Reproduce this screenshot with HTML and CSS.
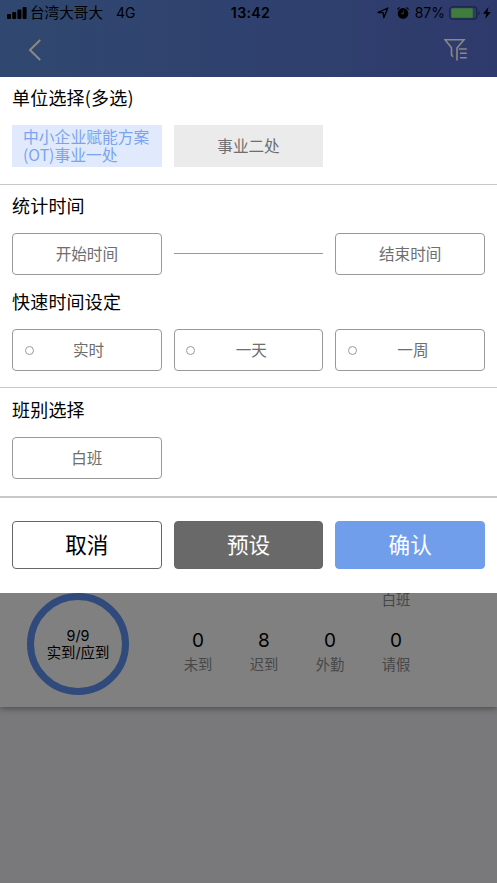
FILE: index.html
```html
<!DOCTYPE html>
<html lang="zh-CN">
<head>
<meta charset="utf-8">
<meta name="viewport" content="width=device-width">
<title>筛选</title>
<link rel="stylesheet" href="styles.css">
</head>
<body>
<header class="header">
  <div class="status">
    <div class="status-left">
      <svg class="signal" width="20" height="12" viewBox="0 0 20 12"><rect x="0" y="7" width="4" height="5" rx="1"/><rect x="5.2" y="5" width="4" height="7" rx="1"/><rect x="10.4" y="2.5" width="4" height="9.5" rx="1"/><rect x="15.6" y="0" width="4" height="12" rx="1"/></svg>
      <span class="carrier">台湾大哥大</span>
      <span class="network">4G</span>
    </div>
    <div class="clock">13:42</div>
    <div class="status-right">
      <svg width="12" height="12" viewBox="0 0 12 12"><path d="M1 5.5 10.8 1 6.8 10.8 6.2 5.7Z" fill="none" stroke="#000" stroke-width="1.3" stroke-linejoin="round"/></svg>
      <svg class="alarm" width="12" height="12" viewBox="0 0 12 12"><circle cx="6" cy="6.4" r="5.3"/><path d="M.4 2.6A7 7 0 0 1 2.6 .6M11.6 2.6A7 7 0 0 0 9.4 .6" fill="none" stroke="#000" stroke-width="1.2"/><path d="M6.3 3.6v3.2H4" fill="none" stroke="#2e3e6e" stroke-width=".9"/></svg>
      <span class="percent">87%</span>
      <svg class="battery" width="32" height="14" viewBox="0 0 32 14"><rect x=".8" y=".8" width="27" height="12.4" rx="3" fill="none" stroke="#1b2445" stroke-width="1.2"/><rect x="2.3" y="2.3" width="21.5" height="9.4" rx="1" fill="#407c3c"/><path d="M29.3 5v4q1.5-.5 1.5-2t-1.5-2" fill="#1b2445"/></svg>
      <svg class="bolt" width="8" height="12" viewBox="0 0 8 12"><path d="M5.5 0 0 6.7h3.3L2.2 12 7.8 4.9H4.4Z"/></svg>
    </div>
  </div>
  <div class="nav">
    <svg width="14" height="22" viewBox="0 0 14 22"><path d="M12.2 1 2 11 12.2 21" fill="none" stroke="#8b8984" stroke-width="2"/></svg>
    <svg width="24" height="24" viewBox="0 0 24 24"><path d="M9 18.7 7.5 17V9.7L1 1.8H20L13 10V22.5M14.8 11H22.8M16 15.3H22.8M16 19.8H22.8" fill="none" stroke="#8b8984" stroke-width="1.6"/></svg>
  </div>
</header>

<main class="panel">
  <section class="section">
    <h2>单位选择(多选)</h2>
    <div class="grid">
      <div class="tag tag-on"><span>中小企业赋能方案</span><span>(OT)事业一处</span></div>
      <div class="tag">事业二处</div>
    </div>
  </section>
  <section class="section section-time">
    <h2>统计时间</h2>
    <div class="grid">
      <div class="option">开始时间</div>
      <div class="dash"></div>
      <div class="option">结束时间</div>
    </div>
    <h2>快速时间设定</h2>
    <div class="grid">
      <div class="option radio"><i></i><span>实时</span></div>
      <div class="option radio"><i></i><span>一天</span></div>
      <div class="option radio"><i></i><span>一周</span></div>
    </div>
  </section>
  <section class="section section-shift">
    <h2>班别选择</h2>
    <div class="grid"><div class="option">白班</div></div>
  </section>
  <div class="grid actions">
    <div class="button">取消</div>
    <div class="button preset">预设</div>
    <div class="button confirm">确认</div>
  </div>
</main>

<section class="card">
  <div class="ring"><span class="ratio">9/9</span><span>实到/应到</span></div>
  <div class="stats">
    <div class="shift">白班</div>
    <div class="stat"><b>0</b><span>未到</span></div>
    <div class="stat"><b>8</b><span>迟到</span></div>
    <div class="stat"><b>0</b><span>外勤</span></div>
    <div class="stat"><b>0</b><span>请假</span></div>
  </div>
</section>
</body>
</html>
```

FILE: styles.css
```css
* { box-sizing: border-box; }
body {
  margin: 0;
  height: 883px;
  overflow: hidden;
  background: #79797b;
  color: #000;
  font-family: Inter, "Noto Sans CJK SC", sans-serif;
}
svg { display: block; flex: none; }
.header {
  height: 77px;
  background: linear-gradient(90deg, #304870, #2e3a6c);
}
.status {
  display: grid;
  grid-template-columns: 1fr auto 1fr;
  align-items: center;
  height: 26px;
  padding: 0 6px 0 7px;
  font-size: 14px;
  line-height: 20px;
}
.status-left, .status-right { display: flex; align-items: center; }
.status-right { justify-content: flex-end; }
.carrier { margin-left: 3px; font-size: 14.6px; }
.network { margin-left: 13px; }
.clock { padding-left: 3px; font-weight: 600; font-size: 14.2px; letter-spacing: .3px; }
.alarm { margin-left: 8px; }
.percent { margin-left: 6px; }
.battery { margin-left: 4px; }
.bolt { margin-left: 2px; }
.nav {
  display: flex;
  justify-content: space-between;
  align-items: center;
  height: 47px;
  padding: 0 29px 0 28px;
}
.panel { position: relative; z-index: 1; height: 515.5px; background: #fff; }
.section {
  height: 108px;
  padding: 8px 12px 0;
  border-bottom: 1px solid #c8c8c8;
}
.section-time { height: 203px; }
.section-shift { height: 109.5px; padding-top: 9px; border-bottom: 2px solid #c8c8c8; }
h2 {
  margin: 0;
  height: 40px;
  font-family: "Noto Sans CJK SC", sans-serif;
  font-size: 18px;
  line-height: 24px;
  font-weight: 400;
  letter-spacing: .2px;
}
.grid {
  display: grid;
  grid-template-columns: repeat(3, 1fr);
  gap: 12px;
}
.grid + h2 { margin-top: 14px; }
.tag, .option {
  display: flex;
  align-items: center;
  justify-content: center;
  height: 42px;
  padding-bottom: 2px;
  font: 15.6px/18px "Noto Sans CJK SC", sans-serif;
  color: #6e6e6e;
}
.tag { background: #ebebeb; }
.tag-on {
  flex-direction: column;
  align-items: flex-start;
  padding: 0 0 0 11px;
  background: #e1eafc;
  color: #7ba4ee;
  font-size: 15.8px;
  line-height: 18.5px;
}
.option { border: 1px solid #999; border-radius: 4px; }
.dash { align-self: center; height: 1px; margin-bottom: 1px; background: #999; }
.radio { justify-content: flex-start; padding: 0 15px 0 11.5px; }
.radio i { width: 9px; height: 9px; border: 1px solid #999; border-radius: 50%; }
.radio span { flex: 1; padding: 0 0 2px; text-align: center; }
.radio:first-child { padding-right: 17px; }
.actions { padding: 23px 12px 0; }
.button {
  display: flex;
  align-items: center;
  justify-content: center;
  height: 48px;
  padding-bottom: 2px;
  border: 1px solid #666;
  border-radius: 4px;
  font: 21.6px/30px "Noto Sans CJK SC", sans-serif;
}
.preset { background: #696969; color: #fff; }
.confirm { background: #719eeb; border-color: #719eeb; color: #fff; }
.card {
  display: flex;
  height: 114px;
  padding-left: 27px;
  background: #808080;
  box-shadow: 0 2px 6px rgba(0, 0, 0, .35);
}
.ring {
  display: flex;
  flex-direction: column;
  align-items: center;
  justify-content: center;
  width: 102px;
  height: 102px;
  border: 7.5px solid #304a7c;
  border-radius: 50%;
  font-size: 14.4px;
  line-height: 17px;
  white-space: nowrap;
}
.stats {
  display: grid;
  grid-template-columns: repeat(4, 66px);
  grid-template-rows: 32px 1fr;
  margin-left: 36px;
  font-size: 14.3px;
  text-align: center;
  color: #474747;
}
.shift { grid-column: 4; line-height: 14px; }
.stat { display: flex; flex-direction: column; grid-row: 2; }
.stat b { font-size: 19px; line-height: 32px; font-weight: 400; color: #000; }
.stat span { line-height: 16px; }
```
